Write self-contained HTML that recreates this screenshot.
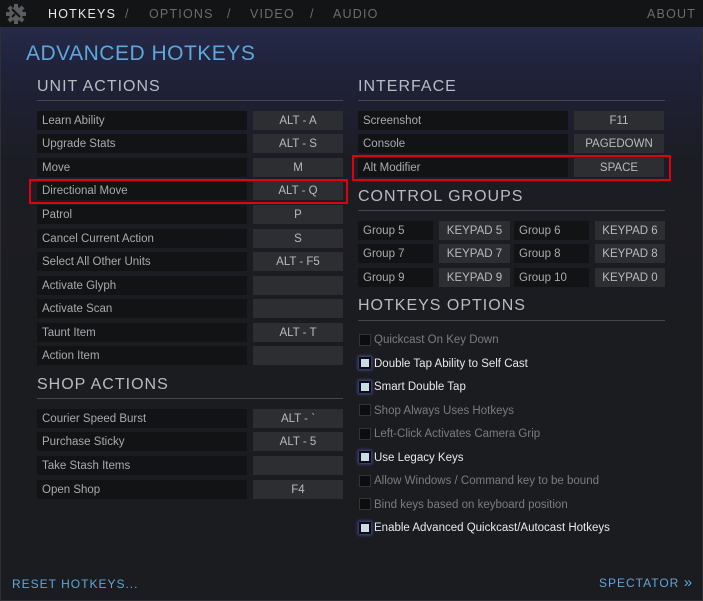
<!DOCTYPE html>
<html><head><style>
*{margin:0;padding:0;box-sizing:border-box}
body{width:703px;height:601px;overflow:hidden;background:#1b1c20;font-family:"Liberation Sans",sans-serif;position:relative}
.top{position:absolute;left:0;top:0;width:703px;height:28px;background:#131416;border-bottom:1px solid #2a2d40}
.nav{position:absolute;top:7px;font-size:12.5px;letter-spacing:1.2px;color:#6a6c70}
.main{position:absolute;left:0;top:28px;width:703px;height:573px;background:linear-gradient(#262a48 0px,#20223a 40px,#1c1d24 130px,#1b1c20 300px);border:1px solid #2e3036;border-top:none}
.h1{position:absolute;left:26px;top:42px;font-size:21px;color:#5ea6de;letter-spacing:0.5px}
.h2{position:absolute;font-size:16px;color:#b8bcc2;letter-spacing:1px}
.line{position:absolute;height:1px;background:#45474d}
.lab{position:absolute;height:19px;background:#121315;color:#a8aaae;font-size:11.5px;line-height:20px;padding-left:5px}
.key{position:absolute;height:19px;background:#2c2e31;color:#b8babd;font-size:11.5px;line-height:20px;text-align:center}
.red{position:absolute;border:2px solid #e00010}
.cb{position:absolute;width:12px;height:12px;background:#0c0d0e;border:1px solid #333}
.cb.on{background:#c9dce6;border:2px solid #0c0d10;box-shadow:0 0 3px 1px #4a4fa0}
.ct{position:absolute;font-size:11.5px;color:#7a7c80}
.ct.on{color:#e6e8ea}
.foot{position:absolute;font-size:12px;color:#5ea6de;letter-spacing:1px}
</style></head><body>
<div class="top">
<svg style="position:absolute;left:6px;top:4px" width="20" height="20" viewBox="0 0 20 20"><g fill="#5a5c60"><circle cx="10" cy="10" r="7"/><rect x="8" y="0" width="4" height="20"/><rect x="0" y="8" width="20" height="4"/><rect x="8" y="0" width="4" height="20" transform="rotate(45 10 10)"/><rect x="8" y="0" width="4" height="20" transform="rotate(-45 10 10)"/></g><path d="M6 5 L14 13 M6 13 L9 10" stroke="#131416" stroke-width="2"/></svg>
<div class="nav" style="left:48px;color:#e8e8e8">HOTKEYS</div>
<div class="nav" style="left:125px">/</div>
<div class="nav" style="left:149px">OPTIONS</div>
<div class="nav" style="left:227px">/</div>
<div class="nav" style="left:250px">VIDEO</div>
<div class="nav" style="left:310px">/</div>
<div class="nav" style="left:333px">AUDIO</div>
<div class="nav" style="left:647px">ABOUT</div>
</div>
<div class="main"></div>
<div class="h1">ADVANCED HOTKEYS</div>
<div class="h2" style="left:37px;top:78px">UNIT ACTIONS</div><div class="line" style="left:37px;top:100px;width:306px"></div>
<div class="h2" style="left:358px;top:78px">INTERFACE</div><div class="line" style="left:358px;top:100px;width:307px"></div>
<div class="h2" style="left:358px;top:188px">CONTROL GROUPS</div><div class="line" style="left:358px;top:210px;width:307px"></div>
<div class="h2" style="left:358px;top:297px">HOTKEYS OPTIONS</div><div class="line" style="left:358px;top:320px;width:307px"></div>
<div class="h2" style="left:37px;top:376px">SHOP ACTIONS</div><div class="line" style="left:37px;top:398px;width:306px"></div>

<div class="lab" style="left:37px;width:210px;top:111px">Learn Ability</div><div class="key" style="left:253px;width:90px;top:111px">ALT - A</div>
<div class="lab" style="left:37px;width:210px;top:134px">Upgrade Stats</div><div class="key" style="left:253px;width:90px;top:134px">ALT - S</div>
<div class="lab" style="left:37px;width:210px;top:158px">Move</div><div class="key" style="left:253px;width:90px;top:158px">M</div>
<div class="lab" style="left:37px;width:210px;top:181px">Directional Move</div><div class="key" style="left:253px;width:90px;top:181px">ALT - Q</div>
<div class="lab" style="left:37px;width:210px;top:205px">Patrol</div><div class="key" style="left:253px;width:90px;top:205px">P</div>
<div class="lab" style="left:37px;width:210px;top:229px">Cancel Current Action</div><div class="key" style="left:253px;width:90px;top:229px">S</div>
<div class="lab" style="left:37px;width:210px;top:252px">Select All Other Units</div><div class="key" style="left:253px;width:90px;top:252px">ALT - F5</div>
<div class="lab" style="left:37px;width:210px;top:276px">Activate Glyph</div><div class="key" style="left:253px;width:90px;top:276px"></div>
<div class="lab" style="left:37px;width:210px;top:299px">Activate Scan</div><div class="key" style="left:253px;width:90px;top:299px"></div>
<div class="lab" style="left:37px;width:210px;top:323px">Taunt Item</div><div class="key" style="left:253px;width:90px;top:323px">ALT - T</div>
<div class="lab" style="left:37px;width:210px;top:346px">Action Item</div><div class="key" style="left:253px;width:90px;top:346px"></div>

<div class="lab" style="left:37px;width:210px;top:409px">Courier Speed Burst</div><div class="key" style="left:253px;width:90px;top:409px">ALT - `</div>
<div class="lab" style="left:37px;width:210px;top:432px">Purchase Sticky</div><div class="key" style="left:253px;width:90px;top:432px">ALT - 5</div>
<div class="lab" style="left:37px;width:210px;top:456px">Take Stash Items</div><div class="key" style="left:253px;width:90px;top:456px"></div>
<div class="lab" style="left:37px;width:210px;top:480px">Open Shop</div><div class="key" style="left:253px;width:90px;top:480px">F4</div>

<div class="lab" style="left:358px;width:210px;top:111px">Screenshot</div><div class="key" style="left:574px;width:90px;top:111px">F11</div>
<div class="lab" style="left:358px;width:210px;top:134px">Console</div><div class="key" style="left:574px;width:90px;top:134px">PAGEDOWN</div>
<div class="lab" style="left:358px;width:210px;top:158px">Alt Modifier</div><div class="key" style="left:574px;width:90px;top:158px">SPACE</div>

<div class="lab" style="left:358px;width:75px;top:221px">Group 5</div><div class="key" style="left:439px;width:71px;top:221px">KEYPAD 5</div>
<div class="lab" style="left:514px;width:75px;top:221px">Group 6</div><div class="key" style="left:595px;width:70px;top:221px">KEYPAD 6</div>
<div class="lab" style="left:358px;width:75px;top:244px">Group 7</div><div class="key" style="left:439px;width:71px;top:244px">KEYPAD 7</div>
<div class="lab" style="left:514px;width:75px;top:244px">Group 8</div><div class="key" style="left:595px;width:70px;top:244px">KEYPAD 8</div>
<div class="lab" style="left:358px;width:75px;top:268px">Group 9</div><div class="key" style="left:439px;width:71px;top:268px">KEYPAD 9</div>
<div class="lab" style="left:514px;width:75px;top:268px">Group 10</div><div class="key" style="left:595px;width:70px;top:268px">KEYPAD 0</div>

<div class="red" style="left:29px;top:179px;width:319px;height:25px"></div>
<div class="red" style="left:352px;top:155px;width:319px;height:26px"></div>

<div class="cb" style="left:359px;top:334px"></div><div class="ct" style="left:374px;top:334px">Quickcast On Key Down</div>
<div class="cb on" style="left:359px;top:357px"></div><div class="ct on" style="left:374px;top:358px">Double Tap Ability to Self Cast</div>
<div class="cb on" style="left:359px;top:381px"></div><div class="ct on" style="left:374px;top:381px">Smart Double Tap</div>
<div class="cb" style="left:359px;top:404px"></div><div class="ct" style="left:374px;top:405px">Shop Always Uses Hotkeys</div>
<div class="cb" style="left:359px;top:428px"></div><div class="ct" style="left:374px;top:428px">Left-Click Activates Camera Grip</div>
<div class="cb on" style="left:359px;top:451px"></div><div class="ct on" style="left:374px;top:452px">Use Legacy Keys</div>
<div class="cb" style="left:359px;top:475px"></div><div class="ct" style="left:374px;top:475px">Allow Windows / Command key to be bound</div>
<div class="cb" style="left:359px;top:498px"></div><div class="ct" style="left:374px;top:499px">Bind keys based on keyboard position</div>
<div class="cb on" style="left:359px;top:522px"></div><div class="ct on" style="left:374px;top:522px">Enable Advanced Quickcast/Autocast Hotkeys</div>

<div class="foot" style="left:12px;top:577px">RESET HOTKEYS...</div>
<div class="foot" style="left:599px;top:576px">SPECTATOR <span style="font-size:15px;line-height:12px">»</span></div>
</body></html>
